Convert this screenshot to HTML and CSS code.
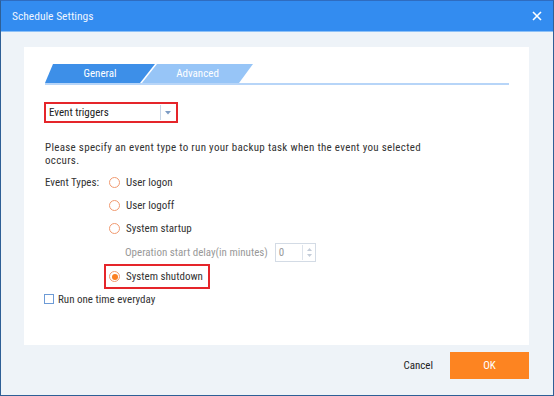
FILE: index.html
```html
<!DOCTYPE html>
<html lang="en">
<head>
  <meta charset="UTF-8">
  <title>Schedule Settings</title>
  <link rel="stylesheet" href="styles.css">
</head>
<body>
  <div class="window">
    <div class="titlebar">
      <span class="title">Schedule Settings</span>
      <svg class="close" width="10" height="10" viewBox="0 0 10 10">
        <path d="M1 1 L9 9 M9 1 L1 9" stroke="#fff" stroke-width="1.6" fill="none"/>
      </svg>
    </div>
    <div class="content">
      <div class="panel">
        <div class="tabs">
          <div class="tab tab-active">General</div>
          <div class="tab tab-other">Advanced</div>
        </div>

        <div class="select-wrap">
          <div class="select">
            <span>Event triggers</span>
            <span class="select-sep"></span>
            <svg class="select-arrow" width="6" height="4" viewBox="0 0 6 4">
              <path d="M0 0 L6 0 L3 3.5 Z" fill="#7d9cc4"/>
            </svg>
          </div>
        </div>

        <p class="desc">Please specify an event type to run your backup task when the event you selected occurs.</p>

        <div class="events">
          <div class="row">
            <span class="label">Event Types:</span>
            <label class="radio"><span class="circle"></span>User logon</label>
          </div>
          <div class="row">
            <span class="label"></span>
            <label class="radio"><span class="circle"></span>User logoff</label>
          </div>
          <div class="row">
            <span class="label"></span>
            <label class="radio"><span class="circle"></span>System startup</label>
          </div>
          <div class="row row-delay">
            <span class="label"></span>
            <span class="delay-text">Operation start delay(in minutes)</span>
            <div class="spin">
              <span>0</span>
              <span class="spin-btns">
                <svg width="5" height="3" viewBox="0 0 5 3"><path d="M0 3 L2.5 0 L5 3 Z" fill="#c3ccd8"/></svg>
                <svg width="5" height="3" viewBox="0 0 5 3"><path d="M0 0 L5 0 L2.5 3 Z" fill="#c3ccd8"/></svg>
              </span>
            </div>
          </div>
          <div class="row row-shutdown">
            <span class="label-short"></span>
            <label class="radio radio-marked"><span class="circle checked"></span>System shutdown</label>
          </div>
        </div>

        <label class="check"><span class="box"></span>Run one time everyday</label>
      </div>

      <div class="footer">
        <span class="cancel">Cancel</span>
        <div class="ok">OK</div>
      </div>
    </div>
  </div>
</body>
</html>
```

FILE: styles.css
```css
body {
  margin: 0;
  font-family: "Roboto Condensed", "Liberation Sans", Arial, sans-serif;
  font-size: 11px;
  color: #333;
}
.window {
  width: 554px;
  height: 396px;
  box-sizing: border-box;
  border: 1px solid #2e5f96;
  border-top-color: #2f6cc0;
  display: flex;
  flex-direction: column;
  background-color: #eef3f8;
}
.titlebar {
  height: 30px;
  background-color: #338cf0;
  border-bottom: 1px solid #8cc0f7;
  display: flex;
  align-items: center;
  justify-content: space-between;
  padding: 0 11px 0 11px;
  color: #eef5ff;
  font-size: 11.5px;
}
.content {
  flex: 1;
  display: flex;
  flex-direction: column;
  padding: 15px 24px 16px 23px;
}
.panel {
  height: 298px;
  background-color: #fff;
  padding: 17px 20px 0 20px;
  box-sizing: border-box;
}
.tabs {
  display: flex;
  border-bottom: 2px solid #b7d5f8;
  height: 19px;
  margin-left: 1px;
}
.tab {
  height: 19px;
  line-height: 20px;
  text-align: center;
  color: #fff;
}
.tab-active {
  width: 110px;
  background-color: #3d8fe8;
  clip-path: polygon(8px 0, 100% 0, calc(100% - 15px) 100%, 0 100%);
}
.tab-other {
  width: 111px;
  margin-left: -13px;
  background-color: #97c5f7;
  clip-path: polygon(15px 0, 100% 0, calc(100% - 14px) 100%, 0 100%);
}
.select-wrap {
  margin-top: 17px;
  width: 134px;
  height: 21px;
  box-sizing: border-box;
  border: 2px solid #e5252a;
}
.select {
  height: 17px;
  display: flex;
  align-items: center;
  padding-left: 3px;
  color: #222;
}
.select span:first-child {
  flex: 1;
}
.select-sep {
  width: 1px;
  height: 15px;
  background-color: #c8d6e8;
  margin-right: 4px;
}
.select-arrow {
  margin-right: 5px;
}
.desc {
  margin: 18px 0 0 1px;
  line-height: 13px;
  width: 390px;
  letter-spacing: 0.3px;
}
.events {
  margin-top: 4px;
}
.row {
  display: flex;
  align-items: center;
  height: 23px;
  margin-left: 1px;
}
.label {
  width: 64px;
  flex-shrink: 0;
}
.label-short {
  width: 59px;
  flex-shrink: 0;
}
.radio {
  display: flex;
  align-items: center;
  gap: 6px;
}
.circle {
  width: 9px;
  height: 9px;
  border: 1px solid #f19a70;
  border-radius: 50%;
  display: inline-flex;
  align-items: center;
  justify-content: center;
}
.circle.checked::after {
  content: "";
  width: 6px;
  height: 6px;
  border-radius: 50%;
  background-color: #fb7f22;
}
.row-delay {
  height: 24px;
}
.delay-text {
  color: #999;
  margin-left: 16px;
}
.spin {
  margin-left: 7px;
  width: 41px;
  height: 19px;
  box-sizing: border-box;
  border: 1px solid #d3dbe5;
  display: flex;
  align-items: center;
  padding-left: 3px;
  color: #999;
}
.spin span:first-child {
  flex: 1;
}
.spin-btns {
  display: flex;
  flex-direction: column;
  gap: 3px;
  height: 15px;
  justify-content: center;
  border-left: 1px solid #dde3eb;
  padding: 0 3px 0 4px;
}
.row-shutdown {
  height: 25px;
}
.radio-marked {
  height: 25px;
  box-sizing: border-box;
  border: 2px solid #e5252a;
  padding: 0 5px 0 3px;
}
.check {
  display: flex;
  align-items: center;
  gap: 4px;
  height: 20px;
}
.box {
  width: 8px;
  height: 8px;
  border: 1px solid #6d9bd6;
}
.footer {
  flex: 1;
  display: flex;
  align-items: flex-end;
  justify-content: flex-end;
}
.cancel {
  height: 27px;
  line-height: 27px;
  margin-right: 17px;
  color: #222;
}
.ok {
  width: 79px;
  height: 27px;
  line-height: 27px;
  text-align: center;
  background-color: #fd8421;
  color: #fff;
}
```
